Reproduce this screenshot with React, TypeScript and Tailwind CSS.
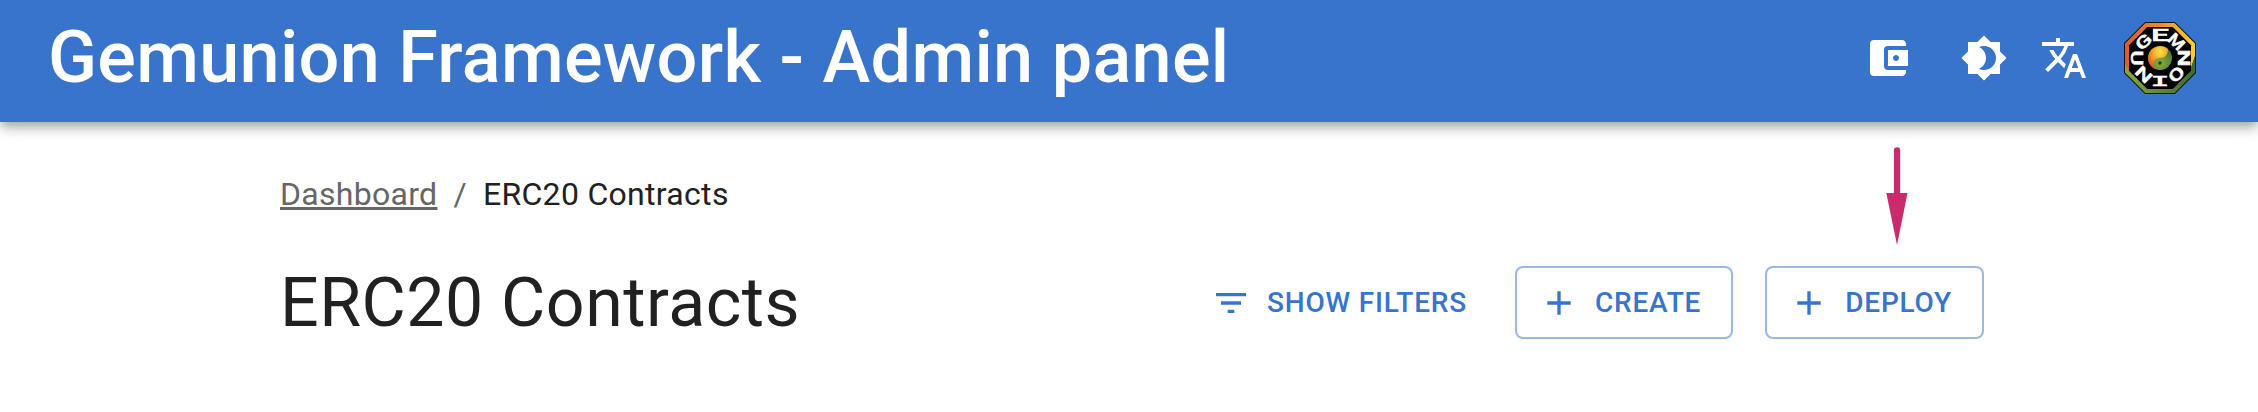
import type { ReactNode } from "react";
import { MdAccountBalanceWallet, MdAdd, MdBrightness4, MdFilterList, MdTranslate } from "react-icons/md";

const letters = [
  { ch: "G", angle: -45, stretch: 1.5 },
  { ch: "E", angle: 0, stretch: 1.95 },
  { ch: "M", angle: 45, stretch: 1.2 },
  { ch: "N", angle: 90, stretch: 1.5 },
  { ch: "O", angle: 135, stretch: 1.45 },
  { ch: "N", angle: 225, stretch: 1.5 },
];

function Emblem() {
  return (
    <svg viewBox="-40 -40 80 80" className="size-20">
      <defs>
        <linearGradient id="rimTop" x1="0" y1="0" x2="1" y2="0">
          <stop offset="0" stopColor="#e0592a" />
          <stop offset="0.5" stopColor="#f08a2c" />
          <stop offset="1" stopColor="#f6d336" />
        </linearGradient>
        <linearGradient id="rimBottom" x1="0" y1="0" x2="1" y2="0">
          <stop offset="0" stopColor="#86a83c" />
          <stop offset="1" stopColor="#3c6b30" />
        </linearGradient>
        <radialGradient id="yang" cx="0.6" cy="0.25" r="0.8">
          <stop offset="0" stopColor="#ffe63c" />
          <stop offset="0.5" stopColor="#f3a02c" />
          <stop offset="1" stopColor="#d9481f" />
        </radialGradient>
        <radialGradient id="yin" cx="0.5" cy="0.7" r="0.7">
          <stop offset="0" stopColor="#8db040" />
          <stop offset="1" stopColor="#3f7030" />
        </radialGradient>
      </defs>
      <polygon points="-15,-36 15,-36 36,-15 36,15 15,36 -15,36 -36,15 -36,-15" fill="#101508" />
      <path d="M-35 8V-14.6L-14.6 -35H14.6L35 -14.6V-2L31 10L-31 12Z" fill="url(#rimTop)" />
      <path d="M-35 6L-31 12L31 10L35 -2V14.6L14.6 35H-14.6L-35 14.6Z" fill="url(#rimBottom)" />
      <polygon points="-12.8,-31 12.8,-31 31,-12.8 31,12.8 12.8,31 -12.8,31 -31,12.8 -31,-12.8" fill="#000" />
      {letters.map(({ ch, angle, stretch }) => (
        <text
          key={angle}
          textAnchor="middle"
          transform={`rotate(${angle}) translate(0 -17.5) scale(${stretch} 1)`}
          className="fill-white stroke-white stroke-[0.5] font-[Roboto,sans-serif] text-[16px] font-medium"
        >
          {ch}
        </text>
      ))}
      <text
        textAnchor="middle"
        transform="translate(-17.5 0) rotate(90) translate(0 11.4) scale(1.45 1)"
        className="fill-white stroke-white stroke-[0.5] font-[Roboto,sans-serif] text-[16px] font-medium"
      >
        U
      </text>
      <text
        textAnchor="middle"
        transform="translate(0 28) scale(2.3 1)"
        className="fill-white stroke-white stroke-[0.5] font-['DejaVu_Sans_Mono',monospace] text-[14px]"
      >
        I
      </text>
      <circle r="12" fill="url(#yin)" />
      <path d="M-4 11.3A12 12 0 1 1 8 -9C8 -3 5 0 0 0C-6 0 -8 6 -4 11.3Z" fill="url(#yang)" />
      <circle cx="0" cy="5" r="1.8" fill="#27451d" />
    </svg>
  );
}

function OutlinedButton({ children }: { children: ReactNode }) {
  return (
    <button className="flex h-[73px] items-center rounded-lg border-2 border-[#9ab8e6] px-[30px] text-[28px] leading-[49px] font-medium tracking-[0.02857em]">
      <MdAdd className="mr-4 -ml-2 size-10" />
      {children}
    </button>
  );
}

export default function App() {
  return (
    <div className="h-[412px] overflow-hidden bg-white font-[Roboto,sans-serif] text-[#212121]">
      <header className="flex h-[122px] items-center bg-[#3874cb] pr-[58px] pl-12 text-white shadow-[0_4px_8px_-2px_rgba(0,0,0,0.2),0_8px_10px_rgba(0,0,0,0.14),0_2px_20px_rgba(0,0,0,0.12)]">
        <h1 className="grow pb-[7px] text-[72px] leading-none font-medium tracking-[0.3px]">
          Gemunion Framework - Admin panel
        </h1>
        <div className="flex items-center pb-1.5">
          <MdAccountBalanceWallet className="mr-12 size-12" />
          <MdBrightness4 className="mr-8 size-12" />
          <MdTranslate className="mr-8 size-12" />
          <Emblem />
        </div>
      </header>
      <main className="relative ml-[280px] w-[1704px]">
        <nav className="flex pt-12 text-[32px] leading-[48px] tracking-[0.00938em] text-[#666666]">
          <a className="underline decoration-[3px] underline-offset-[2px] [text-decoration-skip-ink:none]">Dashboard</a>
          <span className="mx-4">/</span>
          <span className="text-[#212121]">ERC20 Contracts</span>
        </nav>
        <section className="mt-12 flex h-[73px] items-center">
          <h2 className="grow text-[68px] leading-none tracking-[0.00735em]">ERC20 Contracts</h2>
          <div className="flex gap-8 text-[#3874cb]">
            <button className="flex items-center px-4 text-[28px] font-medium tracking-[0.02857em]">
              <MdFilterList className="mr-4 -ml-1 size-10" />
              SHOW FILTERS
            </button>
            <OutlinedButton>CREATE</OutlinedButton>
            <OutlinedButton>DEPLOY</OutlinedButton>
          </div>
        </section>
        <svg viewBox="0 0 22 98" className="absolute top-[25px] left-[1606px] h-[98px] w-[22px]">
          <path d="M11 3.5V50" stroke="#cb2a6e" strokeWidth="6.3" strokeLinecap="round" />
          <path d="M.3 46H21.5L11 98Z" fill="#cb2a6e" />
        </svg>
      </main>
    </div>
  );
}
